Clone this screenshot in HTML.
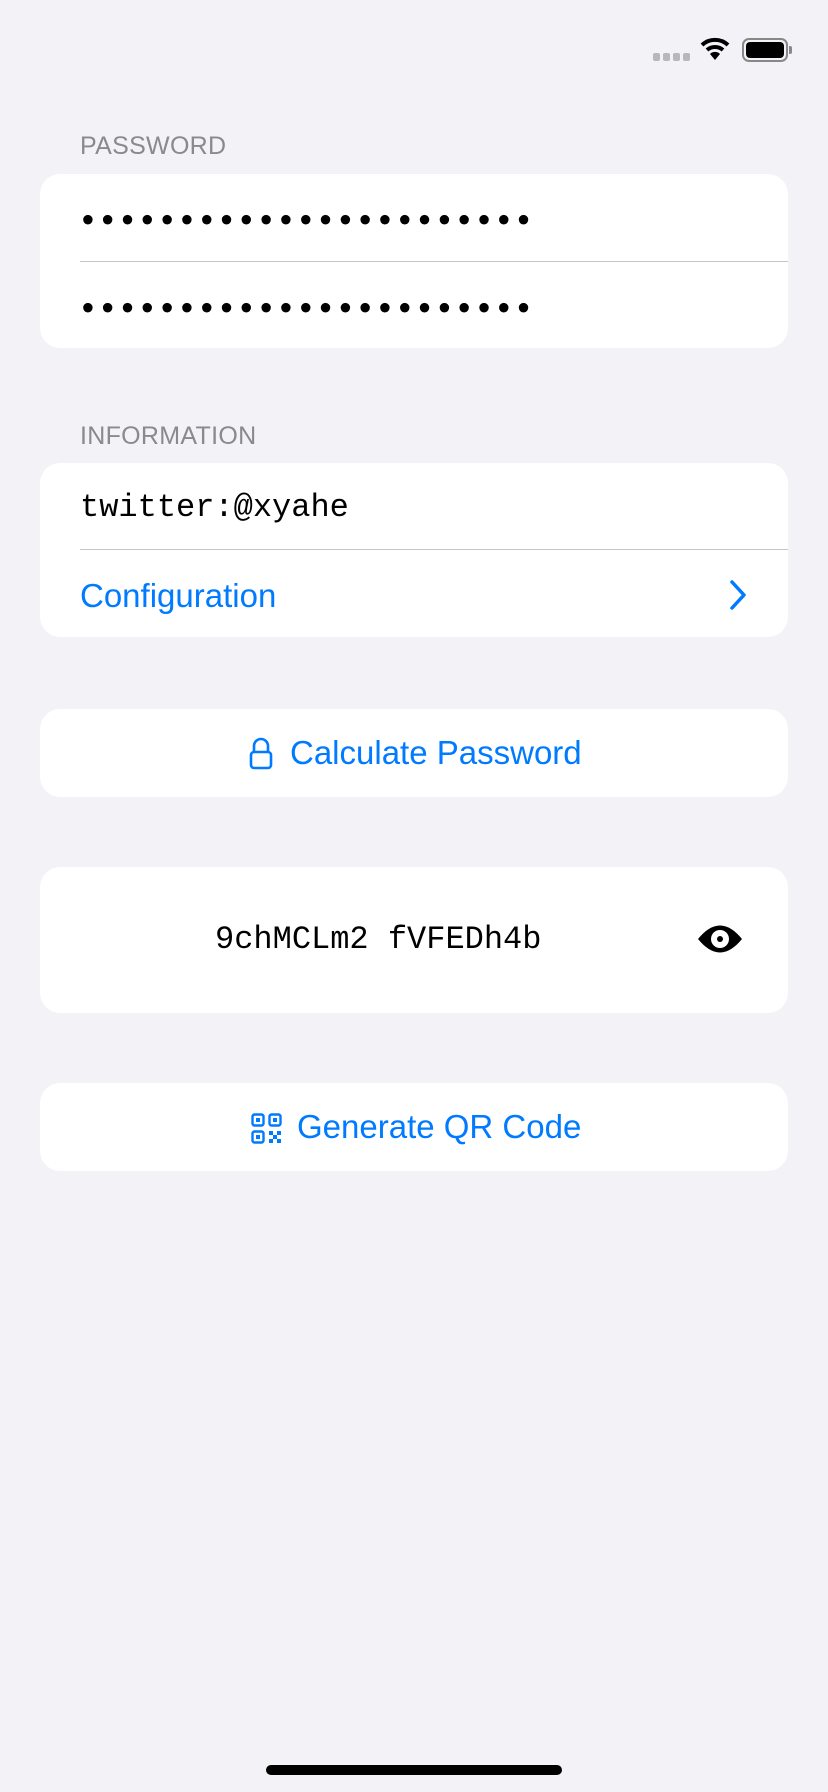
<!DOCTYPE html>
<html><head><meta charset="utf-8"><style>
*{margin:0;padding:0;box-sizing:border-box}
body{width:828px;height:1792px;background:#f2f2f7;position:relative;font-family:"Liberation Sans",sans-serif;overflow:hidden}
.a{position:absolute}
.card{position:absolute;left:40px;width:748px;background:#fff;border-radius:20px}
.lbl{position:absolute;left:80px;font-size:25px;color:#8a8a8e;letter-spacing:0.3px}
.dots{position:absolute;left:38px;font-family:"Liberation Mono",monospace;font-size:33px;line-height:40px;color:#000;font-weight:bold}
.sep{position:absolute;left:40px;right:0;height:1px;background:#c6c6c8}
.blue{color:#007aff;font-size:33px}
</style></head><body>
<div class="a" style="left:653px;top:53px;display:flex;gap:3px">
<div style="width:7px;height:8px;background:#b8b8bc;border-radius:2px"></div><div style="width:7px;height:8px;background:#b8b8bc;border-radius:2px"></div><div style="width:7px;height:8px;background:#b8b8bc;border-radius:2px"></div><div style="width:7px;height:8px;background:#b8b8bc;border-radius:2px"></div></div>
<svg class="a" style="left:700px;top:37px" width="30" height="24" viewBox="0 0 30 24"><path d="M2 8 A19 19 0 0 1 28 8" stroke="#000" stroke-width="4" fill="none"/><path d="M7 13 A12 12 0 0 1 23 13" stroke="#000" stroke-width="4" fill="none"/><path d="M10 17 L15 23 L20 17 A7 7 0 0 0 10 17Z" fill="#000"/></svg>
<div class="a" style="left:742px;top:38px;width:46px;height:24px;border:2px solid #888;border-radius:7px;padding:2px"><div style="width:100%;height:100%;background:#000;border-radius:4px"></div></div>
<div class="a" style="left:789px;top:46px;width:3px;height:8px;background:#888;border-radius:0 2px 2px 0"></div>

<div class="lbl" style="top:132px">PASSWORD</div>
<div class="card" style="top:174px;height:174px">
<div class="dots" style="top:29px">•••••••••••••••••••••••</div>
<div class="sep" style="top:87px"></div>
<div class="dots" style="top:117px">•••••••••••••••••••••••</div>
</div>

<div class="lbl" style="top:422px">INFORMATION</div>
<div class="card" style="top:463px;height:174px">
<div class="a" style="left:40px;top:26px;font-family:'Liberation Mono',monospace;font-size:32px">twitter:@xyahe</div>
<div class="sep" style="top:86px"></div>
<div class="a blue" style="left:40px;top:114px">Configuration</div>
<svg class="a" style="left:688px;top:116px" width="20" height="32" viewBox="0 0 20 32"><path d="M4 3 L16 16 L4 29" stroke="#007aff" stroke-width="3.5" fill="none" stroke-linecap="round" stroke-linejoin="round"/></svg>
</div>

<div class="card" style="top:709px;height:88px">
<svg class="a" style="left:209px;top:28px" width="24" height="33" viewBox="0 0 24 33"><path d="M5 15 V9 A7 7 0 0 1 19 9 V15" stroke="#007aff" stroke-width="2.6" fill="none"/><rect x="2" y="15" width="20" height="16" rx="3" stroke="#007aff" stroke-width="2.6" fill="none"/></svg>
<div class="a blue" style="left:250px;top:25px">Calculate Password</div>
</div>

<div class="card" style="top:867px;height:146px">
<div class="a" style="left:175px;top:54px;font-family:'Liberation Mono',monospace;font-size:32px;letter-spacing:0px">9chMCLm2 fVFEDh4b</div>
<svg class="a" style="left:657px;top:57px" width="46" height="30" viewBox="0 0 46 30"><path d="M1 15 Q23 -12 45 15 Q23 42 1 15Z" fill="#000"/><circle cx="23" cy="15" r="9" fill="#fff"/><circle cx="23" cy="15" r="3" fill="#000"/></svg>
</div>

<div class="card" style="top:1083px;height:88px">
<svg class="a" style="left:211px;top:30px" width="31" height="31" viewBox="0 0 31 31" fill="none" stroke="#007aff" stroke-width="2.4"><rect x="1.5" y="1.5" width="11" height="11" rx="2"/><rect x="18.5" y="1.5" width="11" height="11" rx="2"/><rect x="1.5" y="18.5" width="11" height="11" rx="2"/><g fill="#007aff" stroke="none"><rect x="5" y="5" width="4" height="4"/><rect x="22" y="5" width="4" height="4"/><rect x="5" y="22" width="4" height="4"/><rect x="18" y="18" width="4" height="4"/><rect x="26" y="18" width="4" height="4"/><rect x="22" y="22" width="4" height="4"/><rect x="18" y="26" width="4" height="4"/><rect x="26" y="26" width="4" height="4"/></g></svg>
<div class="a blue" style="left:257px;top:25px">Generate QR Code</div>
</div>

<div class="a" style="left:266px;top:1765px;width:296px;height:10px;background:#000;border-radius:5px"></div>
</body></html>
